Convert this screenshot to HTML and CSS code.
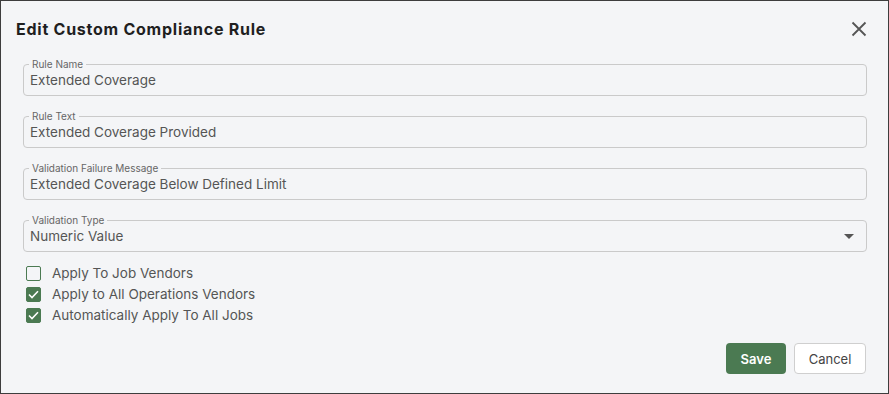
FILE: index.html
```html
<!DOCTYPE html>
<html>
<head>
<meta http-equiv="Content-Type" content="text/html;charset=UTF-8">
<link rel="stylesheet" href="styles.css">
</head>
<body>
<div class="dialog">
  <div class="dialogHeader">
    <span class="dialogTitle">Edit Custom Compliance Rule</span>
    <span class="closeBtn">
      <svg width="16" height="16" viewBox="0 0 16 16"><path d="M1.5 1.5 L14.5 14.5 M14.5 1.5 L1.5 14.5" stroke="#555" stroke-width="1.8" fill="none"/></svg>
    </span>
  </div>
  <div class="dialogBody">
    <fieldset class="field">
      <legend>Rule Name</legend>
      <div class="fieldValue">Extended Coverage</div>
    </fieldset>
    <fieldset class="field">
      <legend>Rule Text</legend>
      <div class="fieldValue">Extended Coverage Provided</div>
    </fieldset>
    <fieldset class="field">
      <legend>Validation Failure Message</legend>
      <div class="fieldValue">Extended Coverage Below Defined Limit</div>
    </fieldset>
    <fieldset class="field">
      <legend>Validation Type</legend>
      <div class="fieldValue selectValue">
        <span>Numeric Value</span>
        <span class="caret"></span>
      </div>
    </fieldset>
    <div class="checkList">
      <label class="checkRow"><span class="box"></span>Apply To Job Vendors</label>
      <label class="checkRow"><span class="box checked"><svg width="11" height="9" viewBox="0 0 11 9"><path d="M1 4.5 L4 7.5 L10 1.2" stroke="#fff" stroke-width="1.6" fill="none"/></svg></span>Apply to All Operations Vendors</label>
      <label class="checkRow"><span class="box checked"><svg width="11" height="9" viewBox="0 0 11 9"><path d="M1 4.5 L4 7.5 L10 1.2" stroke="#fff" stroke-width="1.6" fill="none"/></svg></span>Automatically Apply To All Jobs</label>
    </div>
  </div>
  <div class="dialogFooter">
    <button class="btn btnSave">Save</button>
    <button class="btn btnCancel">Cancel</button>
  </div>
</div>
</body>
</html>
```

FILE: styles.css
```css
html, body{
  margin: 0;
  padding: 0;
}
body{
  width: 889px;
  height: 394px;
  box-sizing: border-box;
  border: 1px solid #3d3d3d;
  background-color: #f4f5f7;
  font-family: Inter, "Noto Sans", sans-serif;
  overflow: hidden;
}
.dialog{
  display: flex;
  flex-direction: column;
  height: 100%;
}
.dialogHeader{
  display: flex;
  align-items: center;
  justify-content: space-between;
  padding: 17px 21px 0 15px;
  height: 22px;
}
.dialogTitle{
  font-size: 16px;
  font-weight: 700;
  letter-spacing: 0.75px;
  color: #1f1f1f;
}
.closeBtn{
  display: flex;
  cursor: pointer;
}
.dialogBody{
  padding: 18px 21px 0 22px;
}
.field{
  margin: 0 0 14px 0;
  padding: 0 6px 5px 6px;
  border: 1px solid #cacaca;
  border-radius: 4px;
}
.field legend{
  font-size: 10px;
  line-height: 12px;
  color: #666;
  padding: 0 3px;
  margin-left: -1px;
}
.fieldValue{
  font-size: 13.5px;
  line-height: 20px;
  color: #555;
}
.selectValue{
  display: flex;
  align-items: center;
  justify-content: space-between;
}
.caret{
  width: 0;
  height: 0;
  margin-right: 6px;
  border-left: 5px solid transparent;
  border-right: 5px solid transparent;
  border-top: 5px solid #555;
}
.checkList{
  display: flex;
  flex-direction: column;
  gap: 6px;
  padding: 0 0 0 3px;
}
.checkRow{
  display: flex;
  align-items: center;
  gap: 11px;
  font-size: 13.5px;
  line-height: 15px;
  color: #555;
}
.box{
  width: 15px;
  height: 15px;
  box-sizing: border-box;
  border: 1.5px solid #4b7a52;
  border-radius: 2px;
  display: flex;
  align-items: center;
  justify-content: center;
}
.box.checked{
  background-color: #4b7a52;
}
.dialogFooter{
  margin-top: auto;
  display: flex;
  justify-content: flex-end;
  gap: 8px;
  padding: 0 22px 19px 0;
}
.btn{
  height: 31px;
  border-radius: 4px;
  font-family: Inter, "Noto Sans", sans-serif;
  font-size: 13px;
  cursor: pointer;
}
.btnSave{
  width: 60px;
  border: none;
  background-color: #4b7a52;
  color: #fff;
  font-weight: 600;
}
.btnCancel{
  width: 72px;
  border: 1px solid #cfcfcf;
  background-color: #fff;
  color: #444;
}
```
